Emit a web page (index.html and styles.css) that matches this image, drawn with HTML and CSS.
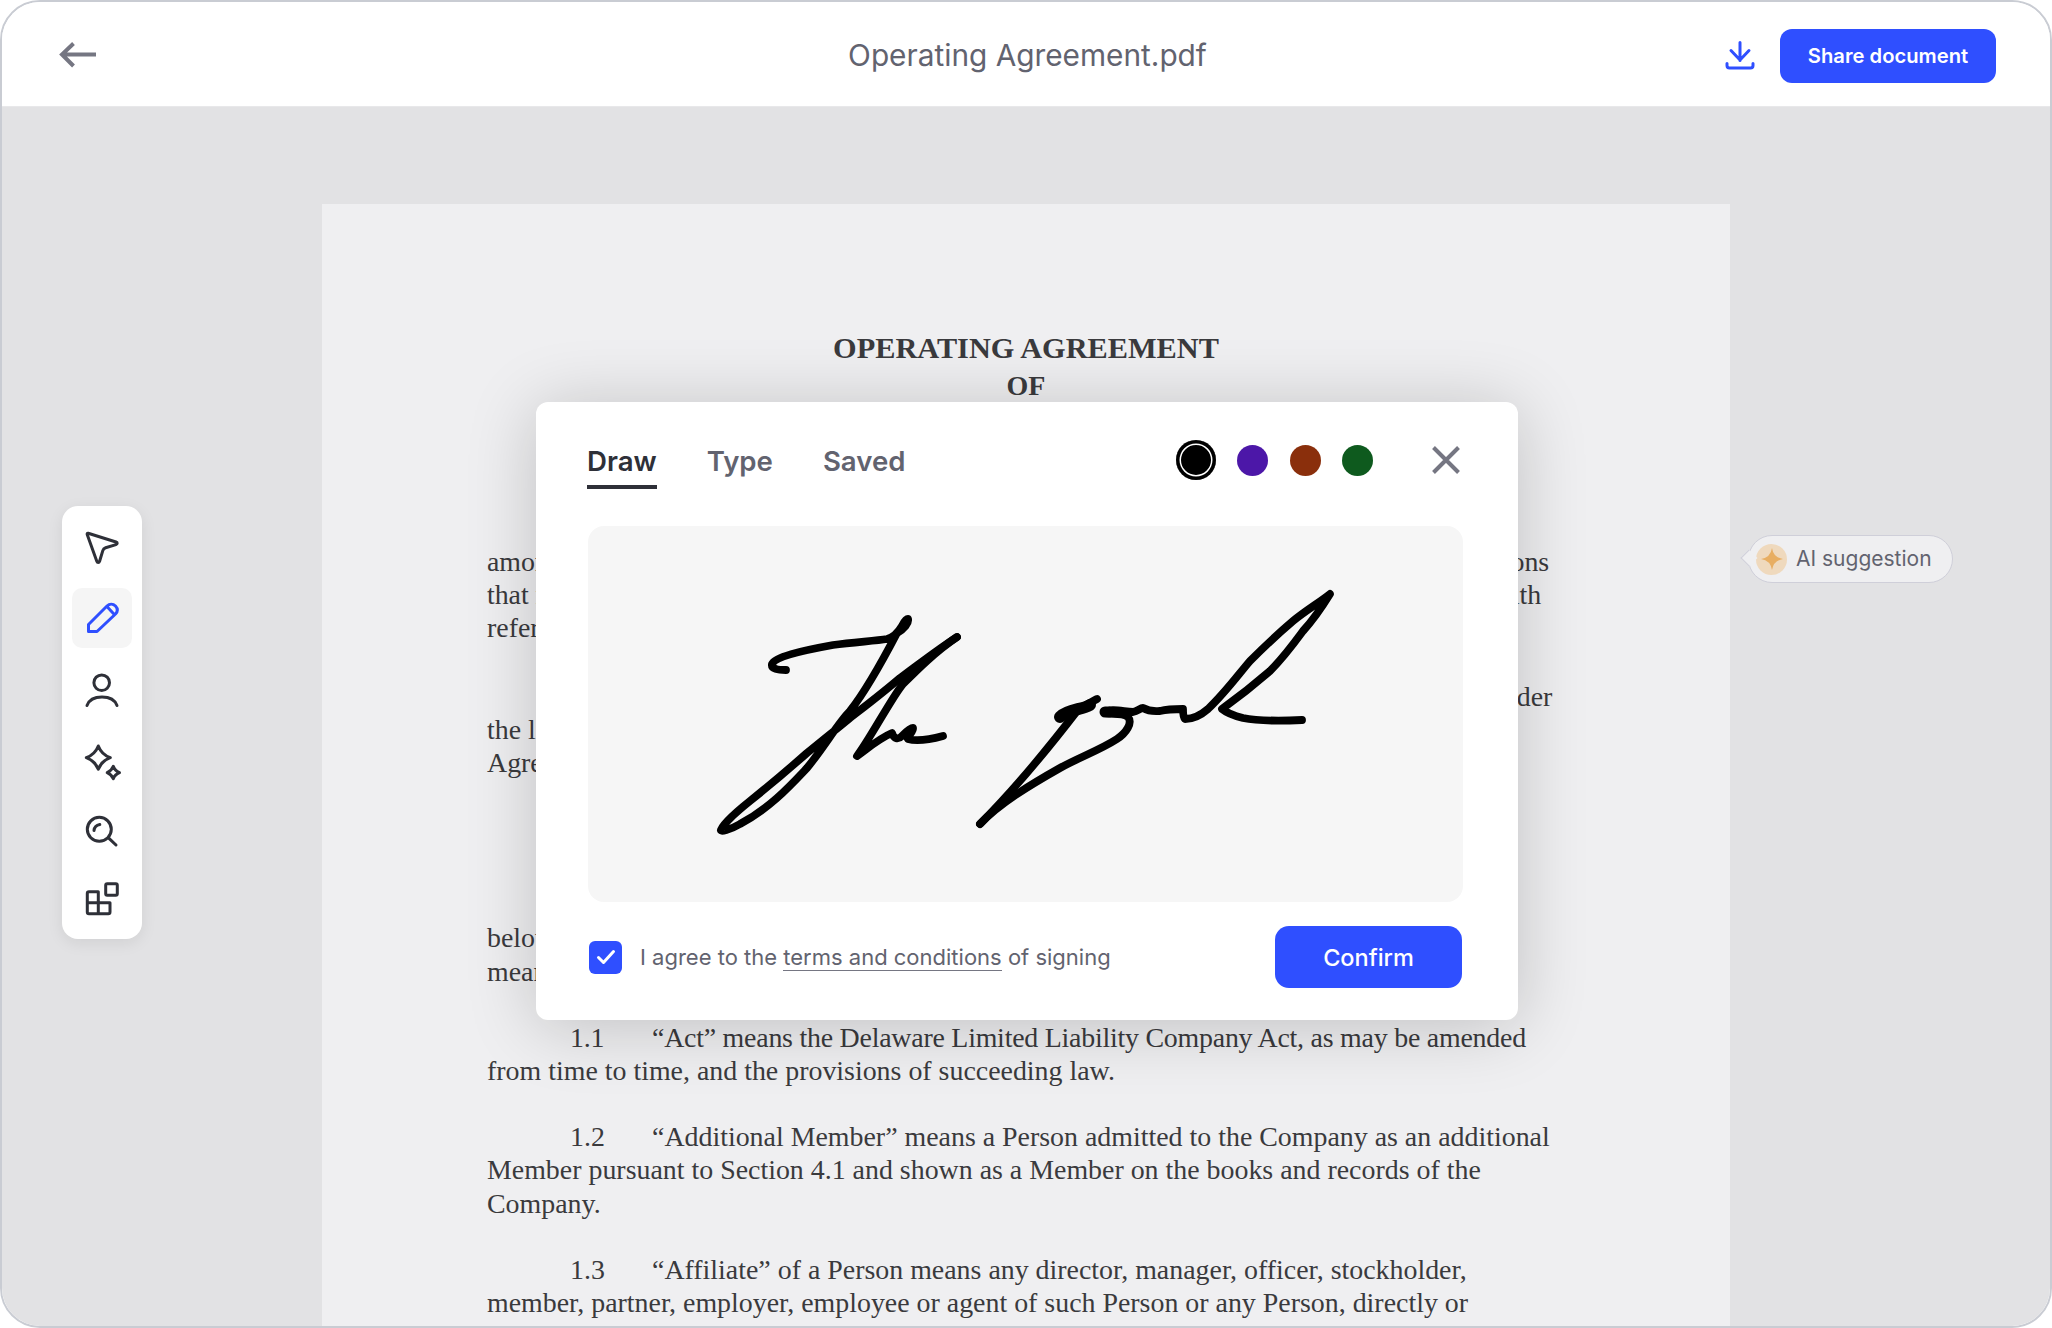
FILE: index.html
```html
<!DOCTYPE html>
<html lang="en">
<head>
    <meta charset="UTF-8">
    <meta name="viewport" content="width=device-width, initial-scale=1.0">
    <title>Operating Agreement.pdf</title>
    <link rel="stylesheet" href="styles.css">
</head>
<body>
    <div class="frame">
        <header class="topbar">
            <button class="back-btn" aria-label="Back">
                <svg width="38" height="26" viewBox="0 0 38 26"><path d="M37 12.5H3M14.5 1.5 3 12.5 14.5 24" fill="none" stroke="#757682" stroke-width="4"/></svg>
            </button>
            <div class="doc-title">Operating Agreement.pdf</div>
            <div class="actions">
                <svg class="download-icon" width="30" height="30" viewBox="0 0 30 30"><path d="M15 1.5V19.5M6 9.5 15 19 24 9.5M2 22.5V24.5Q2 27 4.500 27H25.500Q28 27 28 24.500V22.500" fill="none" stroke="#2f4fff" stroke-width="3" stroke-linecap="round" stroke-linejoin="round"/></svg>
                <button class="share-btn">Share document</button>
            </div>
        </header>

        <main class="workspace">
            <article class="doc">
                <div class="doc-head">OPERATING AGREEMENT<br><span class="doc-of">OF</span></div>

                <p><span class="line snug">among the Company the Persons named on the signature page below and all such other Persons</span><span class="line snug">that may later become Members of this Company in the manner specified herein, together with</span><span class="line">referred to collectively as the Members.</span></p>

                <p class="after-gap"><span class="line indent">The Members wish to form and so continue a limited liability company organized under</span><span class="line">the laws of the State of Delaware on the terms of this</span><span class="line">Agreement.</span></p>

                <p class="doc-section">Definitions</p>

                <p><span class="line">below shall have the following</span><span class="line">meanings:</span></p>

                <p><span class="line indent tight"><span class="num">1.1</span>“Act” means the Delaware Limited Liability Company Act, as may be amended</span><span class="line">from time to time, and the provisions of succeeding law.</span></p>

                <p><span class="line indent"><span class="num">1.2</span>“Additional Member” means a Person admitted to the Company as an additional</span><span class="line">Member pursuant to Section 4.1 and shown as a Member on the books and records of the</span><span class="line">Company.</span></p>

                <p><span class="line indent"><span class="num">1.3</span>“Affiliate” of a Person means any director, manager, officer, stockholder,</span><span class="line">member, partner, employer, employee or agent of such Person or any Person, directly or</span><span class="line">indirectly, through one or more intermediaries, controlling or controlled by or under</span></p>
            </article>

            <nav class="toolbar">
                <div class="tool">
                    <svg viewBox="0 0 60 60"><path d="M16.200 15.200 44 24C45.600 24.600 45.600 26 44 26.600L33.600 29.800C32.200 30.200 31.200 31.200 30.800 32.600L27.600 43.200C27 45 25.400 45 24.800 43.200L15.200 16.600C14.900 15.600 15.400 15 16.200 15.200Z"/></svg>
                </div>
                <div class="tool active">
                    <svg viewBox="0 0 60 60"><path d="M16.500 43.500V36.500L35 18C37.500 15.500 41 15.500 43.500 18 45.800 20.500 45.800 23.500 43.500 26L25 43.500ZM34.700 18.300 42.300 26.500"/></svg>
                </div>
                <div class="tool">
                    <svg viewBox="0 0 60 60"><circle cx="29.700" cy="24.700" r="7.800"/><path d="M15 47.500C17 42 23 39 30 39 37 39 43 42 45 47.500"/></svg>
                </div>
                <div class="tool">
                    <svg viewBox="0 0 60 60"><path d="M26.300 18Q29.500 26.500 38.300 29.700 29.500 32.900 26.300 41.300 23 32.900 14.300 29.700 23 26.500 26.300 18Z"/><path d="M41.300 38.300Q42.800 42.800 47.500 44.700 42.800 46.600 41.300 50.800 39.600 46.600 35.200 44.700 39.600 42.800 41.300 38.300Z"/></svg>
                </div>
                <div class="tool">
                    <svg viewBox="0 0 60 60"><circle cx="27.300" cy="31.300" r="12"/><path d="M37 40.300 44 47M22 32.500Q22.500 27.500 27.800 26.500"/></svg>
                </div>
                <div class="tool">
                    <svg viewBox="0 0 60 60"><rect x="33.700" y="15.700" width="11.600" height="11.600" rx="1.500"/><path d="M26.300 34.700V23.700H17Q15.300 23.700 15.300 25.400V44Q15.300 45.700 17 45.700H36.300Q38 45.700 38 44V34.700ZM15.300 34.700H26.300V45.700"/></svg>
                </div>
            </nav>

            <div class="ai-pin">
                <span class="ai-badge">
                    <svg width="22" height="22" viewBox="0 0 22 22"><path d="M11 0Q12.500 9.500 22 11 12.500 12.500 11 22 9.500 12.500 0 11 9.500 9.500 11 0Z" fill="#e8ae62"/></svg>
                </span>
                <span class="ai-label">AI suggestion</span>
            </div>

            <section class="modal">
                <div class="modal-head">
                    <div class="tabs">
                        <div class="tab selected">Draw</div>
                        <div class="tab">Type</div>
                        <div class="tab">Saved</div>
                    </div>
                    <div class="swatches">
                        <span class="swatch black"></span>
                        <span class="swatch purple"></span>
                        <span class="swatch brown"></span>
                        <span class="swatch green"></span>
                    </div>
                    <svg class="close-icon" width="28" height="28" viewBox="0 0 28 28"><path d="M1.500 1.500 26.500 26.500M26.500 1.500 1.500 26.500" fill="none" stroke="#757682" stroke-width="4"/></svg>
                </div>

                <div class="sign-canvas">
                    <svg viewBox="588 525 875 376" fill="none" stroke="#000" stroke-width="7.800" stroke-linecap="round" stroke-linejoin="round">
                        <path d="M786 669C778 669 771 668 772 663 775 656 800 650 833 644 855 641 875 640 887 638 895 636 899 630 902 625 904 621 906 618 908 618 909 622 904 628 897 632 885 655 868 687 850 710 838 722 825 745 807 767 790 785 770 807 740 823 730 829 720 831 721 829 720 826 735 812 750 800 770 784 790 767 807 752 825 737 838 727 850 717 868 703 885 690 900 677 920 662 940 647 957 636"/>
                        <path d="M957 636C935 651 918 668 903 683 892 696 870 738 857 755 868 747 880 737 892 732 894 738 898 739 902 735 906 731 910 727 913 727 914 731 906 736 908 738 918 741 932 738 943 735"/>
                        <path d="M980 823C1010 793 1050 745 1077 710 1085 704 1090 702 1097 698"/>
                        <path d="M1060 716C1068 708 1082 709 1090 704" stroke-width="12"/>
                        <path d="M980 823C1000 802 1030 784 1060 767 1080 756 1100 749 1117 738 1126 732 1133 722 1128 716 1122 711 1110 714 1105 712 1110 707 1120 710 1133 711 1138 710 1140 707 1143 707 1150 711 1155 710 1160 710 1168 708 1176 708 1183 708 1183 712 1183 716 1185 718 1192 718 1200 715 1208 708 1225 692 1238 674 1250 660 1265 645 1280 631 1293 620 1305 610 1320 601 1330 593 1322 606 1314 618 1303 630 1292 645 1280 660 1270 670 1255 683 1240 695 1222 708 1228 713 1235 715 1243 717 1258 720 1280 720 1302 719"/>
                        <path d="M1105 711H1109" stroke-width="11"/>
                    </svg>
                </div>

                <div class="modal-foot">
                    <span class="checkbox">
                        <svg width="20" height="16" viewBox="0 0 20 16"><path d="M2.500 8.500 7.500 13.500 17.500 2.500" fill="none" stroke="#fff" stroke-width="3" stroke-linecap="round" stroke-linejoin="round"/></svg>
                    </span>
                    <label class="agree">I agree to the <a href="#">terms and conditions</a> of signing</label>
                    <button class="confirm-btn">Confirm</button>
                </div>
            </section>
        </main>
    </div>
</body>
</html>
```

FILE: styles.css
```css
html, body {
    margin: 0;
    padding: 0;
    background: #fff;
}

body {
    font-family: Inter, "Noto Sans", sans-serif;
}

button {
    font-family: inherit;
    border: none;
    cursor: pointer;
}

.frame {
    box-sizing: border-box;
    height: 100vh;
    border: 2px solid #c9ccd3;
    border-radius: 40px;
    overflow: hidden;
    display: flex;
    flex-direction: column;
}

.topbar {
    flex: 0 0 105px;
    box-sizing: border-box;
    display: grid;
    grid-template-columns: 1fr auto 1fr;
    align-items: center;
    background: #fff;
    border-bottom: 1px solid #e8e8ea;
    padding: 0 54px 0 57px;
}

.back-btn {
    justify-self: start;
    background: none;
    padding: 0;
    display: flex;
    margin-top: 1px;
}

.doc-title {
    font-size: 29.800px;
    color: #62636f;
    margin-top: 1px;
}

.actions {
    justify-self: end;
    display: flex;
    align-items: center;
    gap: 25px;
    margin-top: 3px;
}

.download-icon {
    display: block;
}

.share-btn {
    width: 216px;
    height: 54px;
    background: #2f4fff;
    color: #fff;
    font-size: 20.200px;
    font-weight: 600;
    border-radius: 12px;
}

.workspace {
    flex: 1;
    position: relative;
    background: #e2e2e4;
    overflow: hidden;
    padding-top: 97px;
}

.doc {
    box-sizing: border-box;
    width: 1408px;
    height: 1400px;
    margin: 0 auto;
    padding: 126px 0 0 165px;
    background: #efeff1;
    color: #3a3a3d;
    font-family: "Liberation Serif", serif;
    font-size: 27.900px;
    line-height: 33.200px;
}

.doc-head {
    margin-left: -165px;
    text-align: center;
    font-size: 30.300px;
    font-weight: 700;
    line-height: 37px;
    margin-bottom: 141px;
}

.doc-of {
    font-size: 28px;
}

.doc p {
    margin: 0 0 33px;
}

.doc p.after-gap {
    margin-top: 35px;
}

.doc p.doc-section {
    margin: 55px 0 54px;
    padding-left: 400px;
    font-weight: 700;
}

.line {
    display: block;
    white-space: nowrap;
}

.line.indent {
    padding-left: 83px;
}

.line.tight {
    letter-spacing: -0.230px;
}

.line.snug {
    letter-spacing: -0.050px;
}

.num {
    display: inline-block;
    width: 82px;
}

.toolbar {
    position: absolute;
    left: 60px;
    top: 399px;
    box-sizing: border-box;
    width: 80px;
    padding: 12px 10px 11px;
    display: flex;
    flex-direction: column;
    gap: 10px;
    background: #fff;
    border-radius: 16px;
    box-shadow: 0 4px 16px rgba(0, 0, 0, 0.08);
}

.tool {
    width: 60px;
    height: 60px;
    border-radius: 10px;
}

.tool svg {
    display: block;
    width: 60px;
    height: 60px;
    fill: none;
    stroke: #2e3038;
    stroke-width: 3;
    stroke-linecap: round;
    stroke-linejoin: round;
}

.tool.active {
    background: #f5f5f5;
}

.tool.active svg {
    stroke: #2f4fff;
}

.ai-pin {
    position: absolute;
    left: 1746px;
    top: 428px;
    box-sizing: border-box;
    width: 205px;
    height: 48px;
    display: flex;
    align-items: center;
    gap: 9px;
    padding-left: 7px;
    background: #efeff1;
    border: 1.500px solid #cfcfd9;
    border-radius: 24px;
    color: #62636f;
    font-size: 21px;
}

.ai-pin::before {
    content: "";
    position: absolute;
    left: -6px;
    top: 16px;
    width: 11px;
    height: 11px;
    background: #efeff1;
    border-left: 1.500px solid #cfcfd9;
    border-bottom: 1.500px solid #cfcfd9;
    transform: rotate(45deg);
}

.ai-label {
    margin-top: -2px;
}

.ai-badge {
    flex: none;
    width: 31px;
    height: 31px;
    border-radius: 50%;
    background: #efd9bd;
    display: flex;
    align-items: center;
    justify-content: center;
}

.modal {
    position: absolute;
    left: 534px;
    top: 295px;
    box-sizing: border-box;
    width: 982px;
    height: 618px;
    padding: 38px 55px 32px 52px;
    background: #fff;
    border-radius: 12px;
    box-shadow: 0 6px 70px rgba(0, 0, 0, 0.2);
}

.modal-head {
    display: flex;
    align-items: flex-start;
    margin-bottom: 37px;
}

.tabs {
    display: flex;
    gap: 50px;
    margin-top: 4px;
    margin-left: -1px;
    margin-right: auto;
}

.tab {
    font-size: 27.600px;
    font-weight: 600;
    line-height: 34px;
    color: #62636f;
    padding-bottom: 7px;
    border-bottom: 4px solid transparent;
}

.tab.selected {
    color: #2e3038;
    border-bottom-color: #2e3038;
}

.swatches {
    display: flex;
    align-items: center;
    gap: 21.500px;
    height: 40px;
}

.swatch {
    width: 31px;
    height: 31px;
    border-radius: 50%;
}

.swatch.black {
    width: 40px;
    height: 40px;
    background: #000;
    box-shadow: inset 0 0 0 3.500px #000, inset 0 0 0 5px #fff;
}

.swatch.purple {
    background: #4c17a8;
}

.swatch.brown {
    background: #8a2f0c;
}

.swatch.green {
    background: #0e5a1e;
}

.close-icon {
    margin: 6px 3px 0 59px;
}

.sign-canvas {
    height: 376px;
    background: #f6f6f6;
    border-radius: 16px;
}

.sign-canvas svg {
    display: block;
    width: 100%;
    height: 100%;
}

.modal-foot {
    display: flex;
    align-items: center;
    margin-top: 24px;
}

.checkbox {
    flex: none;
    width: 33px;
    height: 33px;
    margin-left: 1px;
    border-radius: 6px;
    background: #2f4fff;
    display: flex;
    align-items: center;
    justify-content: center;
}

.agree {
    margin-left: 18px;
    margin-top: -1px;
    font-size: 22px;
    color: #62636f;
}

.agree a {
    color: inherit;
    text-decoration: none;
    border-bottom: 1.500px solid #757682;
}

.confirm-btn {
    margin-left: auto;
    margin-right: 1px;
    width: 187px;
    height: 62px;
    background: #2f4fff;
    color: #fff;
    font-size: 23.500px;
    font-weight: 500;
    border-radius: 14px;
}
```
